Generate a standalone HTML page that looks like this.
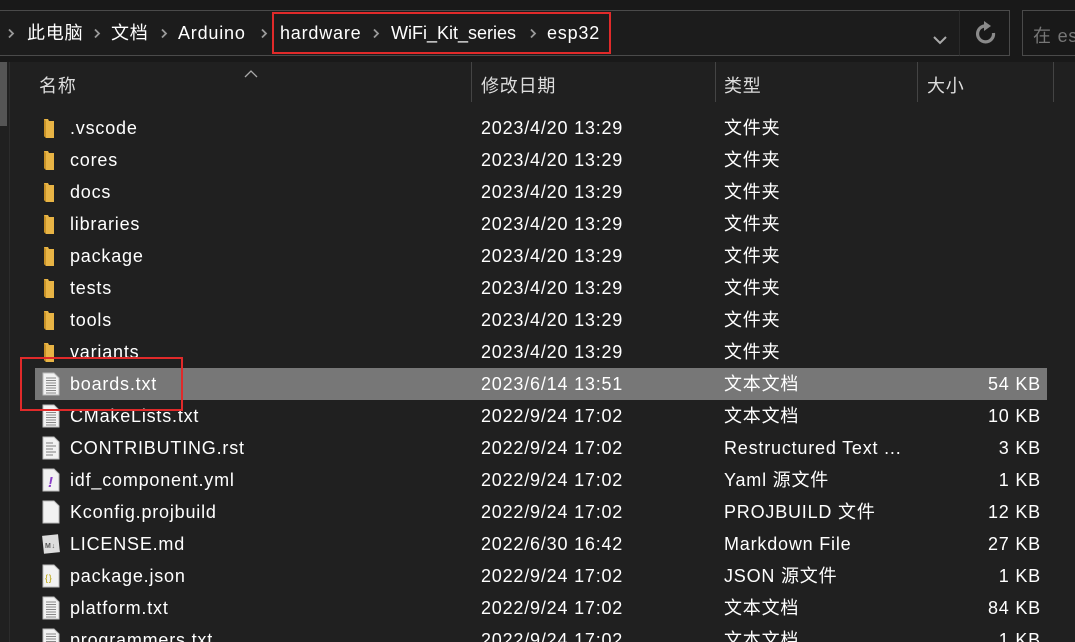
<!DOCTYPE html>
<html><head><meta charset="utf-8"><style>
*{margin:0;padding:0;box-sizing:border-box}
html,body{width:1075px;height:642px;overflow:hidden}
body{background:#202020;font-family:"Liberation Sans","Noto Sans CJK SC",sans-serif;color:#fff;font-size:18px;letter-spacing:0.8px;position:relative}
.a{position:absolute;white-space:nowrap}
.top{left:0;top:0;width:1075px;height:62px;background:#191919}
.bar{left:-2px;top:10px;width:962px;height:46px;border:1px solid #4a4a4a;background:#1c1c1c}
.ref{left:959px;top:10px;width:51px;height:46px;border:1px solid #4a4a4a;border-left:1px solid #2a2a2a}
.srch{left:1022px;top:10px;width:60px;height:46px;border:1px solid #4a4a4a}
.crumb{top:21px;line-height:24px}
.sep{top:28px}
.hdr{top:72px;color:#ddd}
.vd{top:62px;width:1px;height:40px;background:#444}
.row{left:0;width:1075px;height:32px}
.row span{position:absolute;top:5px;line-height:22px}
.red{border:2px solid #e02a2a}
</style></head><body>
<div class="a top"></div>
<div class="a bar"></div>
<div class="a ref"><svg width="51" height="46" style="position:absolute;left:0;top:0"><path d="M33.5 22 A8 8 0 1 1 27 15" stroke="#8a8a8a" stroke-width="3.2" fill="none"/><path d="M24 10 L31 15 L24 20Z" fill="#8a8a8a"/></svg></div>
<div class="a" style="left:933px;top:29px"><svg width="14" height="10"><path d="M1 2 L7 8 L13 2" stroke="#aaa" stroke-width="2" fill="none"/></svg></div>
<div class="a srch"><span style="position:absolute;left:10px;top:11px;color:#777">在 es</span></div>
<svg class="a sep" style="left:7px" width="8" height="12"><path d="M2 1.5 L6 5.5 L2 9.5" stroke="#999" stroke-width="1.8" fill="none"/></svg>
<div class="a crumb" style="left:27px">此电脑</div>
<svg class="a sep" style="left:93px" width="8" height="12"><path d="M2 1.5 L6 5.5 L2 9.5" stroke="#999" stroke-width="1.8" fill="none"/></svg>
<div class="a crumb" style="left:111px">文档</div>
<svg class="a sep" style="left:160px" width="8" height="12"><path d="M2 1.5 L6 5.5 L2 9.5" stroke="#999" stroke-width="1.8" fill="none"/></svg>
<div class="a crumb" style="left:178px">Arduino</div>
<svg class="a sep" style="left:260px" width="8" height="12"><path d="M2 1.5 L6 5.5 L2 9.5" stroke="#999" stroke-width="1.8" fill="none"/></svg>
<div class="a crumb" style="left:280px">hardware</div>
<svg class="a sep" style="left:372px" width="8" height="12"><path d="M2 1.5 L6 5.5 L2 9.5" stroke="#999" stroke-width="1.8" fill="none"/></svg>
<div class="a crumb" style="left:391px;letter-spacing:0">WiFi_Kit_series</div>
<svg class="a sep" style="left:529px" width="8" height="12"><path d="M2 1.5 L6 5.5 L2 9.5" stroke="#999" stroke-width="1.8" fill="none"/></svg>
<div class="a crumb" style="left:547px">esp32</div>
<div class="a red" style="left:272px;top:12px;width:339px;height:42px"></div>
<div class="a" style="left:0;top:62px;width:7px;height:64px;background:#555"></div>
<div class="a" style="left:9px;top:62px;width:1px;height:580px;background:#2c2c2c"></div>
<div class="a" style="left:244px;top:62px"><svg width="14" height="8"><path d="M1 7 L7 1 L13 7" stroke="#aaa" stroke-width="1.3" fill="none"/></svg></div>
<div class="a hdr" style="left:39px">名称</div>
<div class="a vd" style="left:471px"></div><div class="a hdr" style="left:481px">修改日期</div>
<div class="a vd" style="left:715px"></div><div class="a hdr" style="left:724px">类型</div>
<div class="a vd" style="left:917px"></div><div class="a hdr" style="left:927px">大小</div>
<div class="a vd" style="left:1053px"></div>
<div class="a" style="left:35px;top:368px;width:1012px;height:32px;background:#777"></div>
<div id="rows"></div>
<script>
const F='<svg width="14" height="22"><path d="M2 2 L6 2 L7 4 L12 4 L12 21 L4 21 L2 19Z" fill="#e8b445"/><path d="M2 2 L4 4 L4 21 L2 19Z" fill="#c89228"/></svg>';
function doc(t){let s='<svg width="18" height="24"><path d="M1 1 L12 1 L17 6 L17 23 L1 23Z" fill="#f2f2f2" stroke="#bbb"/>';
if(t=='t')for(let y=6;y<22;y+=2.5)s+=`<line x1="4" y1="${y}" x2="14" y2="${y}" stroke="#888" stroke-width="1"/>`;
if(t=='r')for(let y=7;y<20;y+=3)s+=`<line x1="4" y1="${y}" x2="${y%2?11:14}" y2="${y}" stroke="#999" stroke-width="1.3"/>`;
if(t=='y')s+='<text x="6" y="19" font-size="15" fill="#8a3fc8" font-weight="bold" font-style="italic">!</text>';
if(t=='j')s+='<text x="3" y="17" font-size="9" fill="#b8a000">{}</text>';
if(t=='m')s='<svg width="18" height="24"><rect x="1" y="3" width="16" height="18" fill="#ddd" transform="rotate(-6 9 12)"/><text x="3" y="16" font-size="7" fill="#555" font-weight="bold">M↓</text>';
return s+'</svg>';}
const R=[['f','.vscode','2023/4/20 13:29','文件夹',''],['f','cores','2023/4/20 13:29','文件夹',''],['f','docs','2023/4/20 13:29','文件夹',''],['f','libraries','2023/4/20 13:29','文件夹',''],['f','package','2023/4/20 13:29','文件夹',''],['f','tests','2023/4/20 13:29','文件夹',''],['f','tools','2023/4/20 13:29','文件夹',''],['f','variants','2023/4/20 13:29','文件夹',''],
['t','boards.txt','2023/6/14 13:51','文本文档','54 KB'],['t','CMakeLists.txt','2022/9/24 17:02','文本文档','10 KB'],['r','CONTRIBUTING.rst','2022/9/24 17:02','Restructured Text ...','3 KB'],['y','idf_component.yml','2022/9/24 17:02','Yaml 源文件','1 KB'],['b','Kconfig.projbuild','2022/9/24 17:02','PROJBUILD 文件','12 KB'],['m','LICENSE.md','2022/6/30 16:42','Markdown File','27 KB'],['j','package.json','2022/9/24 17:02','JSON 源文件','1 KB'],['t','platform.txt','2022/9/24 17:02','文本文档','84 KB'],['t','programmers.txt','2022/9/24 17:02','文本文档','1 KB']];
let h='';R.forEach((r,i)=>{const y=112+32*i;h+=`<div class="a row" style="top:${y}px"><span style="left:42px;top:${r[0]=='f'?5:4}px">${r[0]=='f'?F:doc(r[0])}</span><span style="left:70px">${r[1]}</span><span style="left:481px">${r[2]}</span><span style="left:724px">${r[3]}</span><span style="right:34px">${r[4]}</span></div>`});
document.getElementById('rows').innerHTML=h;
</script>
<div class="a red" style="left:20px;top:357px;width:163px;height:54px"></div>
</body></html>
